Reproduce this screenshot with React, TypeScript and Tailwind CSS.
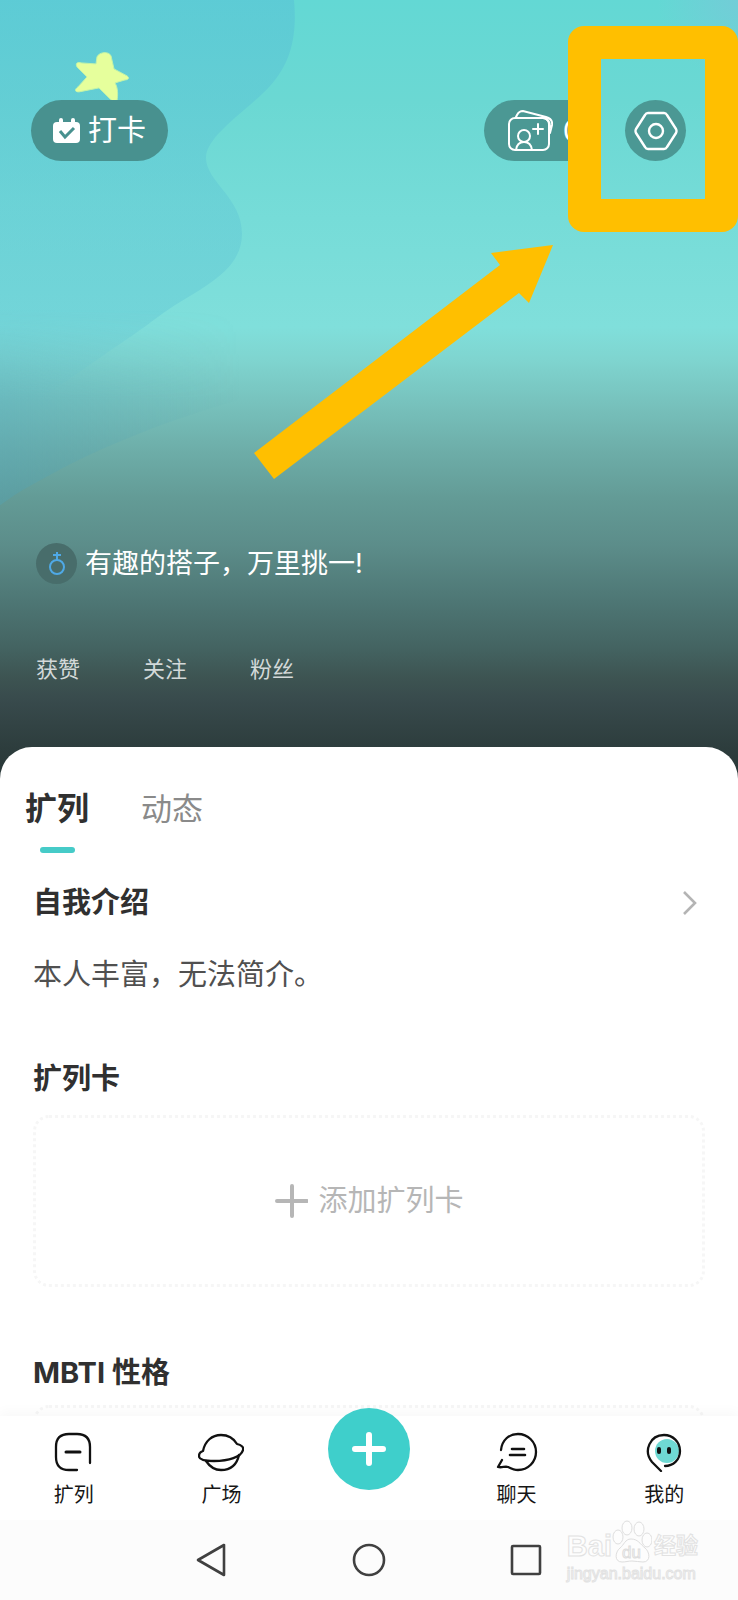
import type { ReactNode } from "react";

const stats = ["获赞", "关注", "粉丝"];

function HeroBackground() {
  return (
    <svg
      className="absolute inset-0 h-full w-full"
      viewBox="0 0 738 780"
      preserveAspectRatio="none"
      aria-hidden="true"
    >
      <defs>
        <linearGradient id="sky" x1="0" y1="0" x2="0" y2="780" gradientUnits="userSpaceOnUse">
          <stop offset="0" stopColor="#63d8d4" />
          <stop offset="0.13" stopColor="#6bd8d3" />
          <stop offset="0.28" stopColor="#76dcd8" />
          <stop offset="0.42" stopColor="#80dfdb" />
          <stop offset="0.46" stopColor="#7fd5d0" />
          <stop offset="0.52" stopColor="#77c1bc" />
          <stop offset="0.58" stopColor="#6dada8" />
          <stop offset="0.64" stopColor="#639b96" />
          <stop offset="0.7" stopColor="#5c8d8a" />
          <stop offset="0.77" stopColor="#4e7775" />
          <stop offset="0.83" stopColor="#446462" />
          <stop offset="0.87" stopColor="#3d5452" />
          <stop offset="0.9" stopColor="#384a4c" />
          <stop offset="0.96" stopColor="#2d3d3d" />
          <stop offset="1" stopColor="#283636" />
        </linearGradient>
        <linearGradient id="wave" x1="0" y1="0" x2="0" y2="400" gradientUnits="userSpaceOnUse">
          <stop offset="0" stopColor="#59c3d6" stopOpacity="0.6" />
          <stop offset="0.5" stopColor="#5fc5d5" stopOpacity="0.42" />
          <stop offset="0.78" stopColor="#5fc5d5" stopOpacity="0.4" />
          <stop offset="0.87" stopColor="#5fc5d5" stopOpacity="0.2" />
          <stop offset="1" stopColor="#5fc5d5" stopOpacity="0" />
        </linearGradient>
        <linearGradient id="shore" x1="0" y1="0" x2="240" y2="0" gradientUnits="userSpaceOnUse">
          <stop offset="0" stopColor="#4fa5bb" stopOpacity="0.34" />
          <stop offset="0.25" stopColor="#4fa5bb" stopOpacity="0.24" />
          <stop offset="1" stopColor="#4fa5bb" stopOpacity="0" />
        </linearGradient>
        <linearGradient id="fade" x1="0" y1="310" x2="0" y2="400" gradientUnits="userSpaceOnUse">
          <stop offset="0" stopColor="#000" />
          <stop offset="1" stopColor="#fff" />
        </linearGradient>
        <mask id="shoreMask">
          <rect y="300" width="260" height="220" fill="url(#fade)" />
        </mask>
        <radialGradient id="corner" cx="738" cy="0" r="80" gradientUnits="userSpaceOnUse">
          <stop offset="0" stopColor="#76cad8" stopOpacity="0.8" />
          <stop offset="1" stopColor="#76cad8" stopOpacity="0" />
        </radialGradient>
      </defs>
      <rect width="738" height="780" fill="url(#sky)" />
      <rect x="658" width="80" height="80" fill="url(#corner)" />
      <path
        d="M0 0H294C297 34 292 62 270 86C246 112 206 136 206 158C206 182 242 198 242 234C242 274 196 290 164 313C148 325 130 338 116 347L40 400H0Z"
        fill="url(#wave)"
      />
      <path d="M0 310H240V400C170 420 110 444 60 470C38 482 18 492 0 506Z" fill="url(#shore)" mask="url(#shoreMask)" />
      <path
        d="M97 57C99 52 109 51 111 56L114 69L127 76C130 78 128 80 125 80L115 83C118 88 118 95 117 101C115 103 112 101 110 99L99 88L79 92C75 92 74 90 78 87L87 77L77 67C75 63 78 62 81 63L96 64Z"
        fill="#e6ff9c"
        stroke="#c2f3a8"
        strokeWidth="1"
      />
    </svg>
  );
}

function HeroBar() {
  return (
    <div className="flex items-center justify-between pr-[52px] pl-[31px]">
      <button className="flex h-[61px] items-center gap-2 rounded-full bg-[#48918f] px-[22px] text-[29px] leading-10 text-white">
        <svg width="27" height="26" viewBox="0 0 27 26" aria-hidden="true">
          <path d="M8 2V8M20 2V8" stroke="#fff" strokeWidth="4" strokeLinecap="round" />
          <rect y="4" width="27" height="21" rx="4" fill="#fff" />
          <path d="M7 13L12 19L21 10" fill="none" stroke="#48918f" strokeWidth="3" />
        </svg>
        打卡
      </button>

      <div className="flex items-center gap-6">
        <button
          className="flex h-[61px] items-center gap-[10px] rounded-full bg-[#4b9894] pr-5 pl-6 text-[29px] leading-10 text-white"
          aria-label="名片 0"
        >
          <svg
            width="45"
            height="41"
            viewBox="0 0 45 41"
            fill="none"
            stroke="#fff"
            strokeWidth="2"
            strokeLinecap="round"
            aria-hidden="true"
          >
            <path d="M8 7L9 5Q11 1 15 1L38 7Q45 9 44 15L42 23M35 8Q42 9 42 17" />
            <rect x="1" y="8" width="40" height="32" rx="6" />
            <circle cx="16" cy="26" r="6" />
            <path d="M8 40Q9 32 16 32T24 40M30 14V24M25 19H35" />
          </svg>
          0
        </button>
        <button
          className="flex size-[61px] items-center justify-center rounded-full bg-[#4b9894]"
          aria-label="设置"
        >
          <svg
            width="44"
            height="40"
            viewBox="0 0 44 40"
            fill="none"
            stroke="#fff"
            strokeWidth="2.4"
            strokeLinejoin="round"
            aria-hidden="true"
          >
            <path d="M14 2H30Q32 2 33 4L42 18Q43 20 42 22L33 36Q32 38 30 38H14Q12 38 11 36L2 22Q1 20 2 18L11 4Q12 2 14 2Z" />
            <circle cx="22" cy="20" r="7" />
          </svg>
        </button>
      </div>
    </div>
  );
}

function SectionTitle({ children }: { children: ReactNode }) {
  return <h2 className="text-[29px] leading-10 font-bold text-[#303030]">{children}</h2>;
}

function NavItem({ label, children }: { label: string; children: ReactNode }) {
  return (
    <a href="#" className="flex flex-1 flex-col items-center gap-[9px] pt-4 text-[20px] leading-7 text-[#161616]">
      <svg
        width="46"
        height="40"
        viewBox="0 0 46 40"
        fill="none"
        stroke="#111"
        strokeWidth="2.3"
        strokeLinecap="round"
        strokeLinejoin="round"
        aria-hidden="true"
      >
        {children}
      </svg>
      {label}
    </a>
  );
}

function Watermark() {
  return (
    <div
      className="absolute right-10 bottom-4 flex flex-col items-start font-['Liberation_Sans','Noto_Sans_CJK_SC',sans-serif] text-[#fdfdfd] [-webkit-text-stroke:1px_#e2e2e2]"
      aria-hidden="true"
    >
      <div className="flex items-end">
        <span className="text-[29px] leading-9 font-bold">Bai</span>
        <svg width="40" height="44" viewBox="0 0 40 44" fill="#fdfdfd" stroke="#dedede">
          <ellipse cx="6" cy="17" rx="5" ry="7" />
          <ellipse cx="15" cy="8" rx="5" ry="7" />
          <ellipse cx="27" cy="9" rx="5" ry="7" />
          <ellipse cx="35" cy="20" rx="5" ry="7" />
          <path d="M19 19C13 19 12 25 8 28C3 32 2 42 10 42C14 42 16 41 20 41S27 42 31 42C39 42 38 32 33 28C28 24 26 19 19 19Z" />
          <text x="10" y="38" fontSize="17">
            du
          </text>
        </svg>
        <span className="pl-[2px] text-[22px] leading-9 font-bold">经验</span>
      </div>
      <span className="text-[16px] leading-5">jingyan.baidu.com</span>
    </div>
  );
}

export default function App() {
  return (
    <div className="flex h-screen flex-col bg-white font-['Inter','Noto_Sans_CJK_SC',sans-serif]">
      <main className="relative min-h-0 flex-1 overflow-x-hidden overflow-y-auto [scrollbar-width:none]">
        <header className="relative pt-[100px] pb-[94px]">
          <HeroBackground />
          <div className="relative">
            <HeroBar />
            <div className="mt-[382px] flex items-center gap-2 pl-9">
              <span className="flex size-[41px] items-center justify-center rounded-full bg-[#486d6b]">
                <svg
                  width="18"
                  height="25"
                  viewBox="0 0 18 25"
                  fill="none"
                  stroke="#4fa9e6"
                  strokeWidth="2"
                  role="img"
                  aria-label="男"
                >
                  <circle cx="9" cy="16" r="7" />
                  <path d="M9 1V9M5 4H13" />
                </svg>
              </span>
              <p className="text-[27px] leading-10 text-white">有趣的搭子，万里挑一!</p>
            </div>
            <div className="mt-[69px] flex gap-[63px] pl-9">
              {stats.map((label) => (
                <a key={label} href="#" className="text-[22px] leading-8 text-[#d3d9d9]">
                  {label}
                </a>
              ))}
            </div>
          </div>

          {/* Highlight frame and arrow over the settings button */}
          <div className="pointer-events-none absolute top-[26px] right-0 h-[206px] w-[170px] rounded-[16px] border-[33px] border-[#ffbf00]" />
          <svg
            className="pointer-events-none absolute top-[245px] right-[185px]"
            width="299"
            height="234"
            viewBox="0 0 299 234"
            aria-hidden="true"
          >
            <path d="M299 0L237 8L246 20L0 208L20 234L265 48L275 58Z" fill="#ffbf00" />
          </svg>
        </header>

        <section className="relative -mt-8 rounded-t-[32px] bg-white pt-[38px]">
          <div className="flex items-start gap-[52px] pl-[25px]" role="tablist">
            <button
              role="tab"
              aria-selected="true"
              className="flex flex-col items-center gap-[14px] text-[32px] leading-[48px] font-bold text-[#303030]"
            >
              扩列
              <span className="h-[6px] w-[35px] rounded-full bg-[#46cbc8]" />
            </button>
            <button role="tab" aria-selected="false" className="text-[31px] leading-[48px] text-[#8a8a8a]">
              动态
            </button>
          </div>

          <div className="px-[33px] pt-[30px]">
            <div className="flex items-center justify-between pr-[8px]">
              <SectionTitle>自我介绍</SectionTitle>
              <svg width="15" height="26" viewBox="0 0 15 26" fill="none" stroke="#b4b4b4" strokeWidth="2.6" aria-hidden="true">
                <path d="M2 2L13 13L2 24" />
              </svg>
            </div>
            <p className="mt-8 text-[29px] leading-10 text-[#505050]">本人丰富，无法简介。</p>

            <div className="mt-16">
              <SectionTitle>扩列卡</SectionTitle>
              <button className="mt-4 flex h-[172px] w-full items-center justify-center gap-[10px] rounded-[16px] border-3 border-dotted border-[#f6f6f6] text-[29px] leading-10 text-[#b6b6b6]">
                <svg width="34" height="34" viewBox="0 0 34 34" stroke="#b6b6b6" strokeWidth="4" strokeLinecap="round" aria-hidden="true">
                  <path d="M18 2V32M3 17H33" />
                </svg>
                添加扩列卡
              </button>
            </div>

            <div className="mt-[66px]">
              <SectionTitle>MBTI 性格</SectionTitle>
              <div className="mt-3 h-[172px] rounded-[16px] border-3 border-dotted border-[#f6f6f6]" />
            </div>
          </div>
        </section>
      </main>

      <nav className="relative flex h-[104px] items-start bg-white shadow-[0_-4px_12px_rgba(0,0,0,0.03)]">
        <NavItem label="扩列">
          <path d="M26 38H18Q5 38 5 25V15Q5 2 18 2H26Q39 2 39 15V31" />
          <path d="M15 20H29" strokeWidth="3" />
        </NavItem>
        <NavItem label="广场">
          <path d="M5 19C7 9 14 3 23 3C31 3 36 7 39 12C43 13 46 15 45 18C43 25 31 29 16 29C8 29 1 28 1 24C1 21 2 20 5 19Z" />
          <path d="M8 29C12 35 17 38 23 38C33 38 39 32 41 23" />
        </NavItem>
        <div className="flex flex-1 justify-center">
          <button
            className="-mt-2 flex size-[82px] items-center justify-center rounded-full bg-[#3fcfcb]"
            aria-label="发布"
          >
            <svg width="36" height="36" viewBox="0 0 36 36" stroke="#fff" strokeWidth="6" strokeLinecap="round" aria-hidden="true">
              <path d="M18 4V32M4 18H32" />
            </svg>
          </button>
        </div>
        <NavItem label="聊天">
          <path d="M7 18C8 8 15 2 24 2C34 2 42 10 42 20S34 38 24 38C20 38 16 36 14 35C11 34 8 36 4 35L8 28" />
          <path d="M18 17H30M16 23H31" strokeWidth="2.6" />
        </NavItem>
        <NavItem label="我的">
          <circle cx="26" cy="19" r="12" fill="#6fd9d3" stroke="none" />
          <path d="M20 39L11 30C2 19 9 3 23 3C32 3 39 10 39 19C39 28 32 34 24 34" />
          <path d="M18 17V20M28 17V20" strokeWidth="4" />
        </NavItem>
      </nav>

      <footer className="relative flex h-20 items-center justify-center gap-[123px] bg-[#fcfcfc]">
        <button aria-label="返回">
          <svg width="34" height="36" viewBox="0 0 34 36" fill="none" stroke="#404040" strokeWidth="2.6" strokeLinejoin="round">
            <path d="M29 3V33L3 18Z" />
          </svg>
        </button>
        <button aria-label="主页">
          <svg width="34" height="36" viewBox="0 0 34 36" fill="none" stroke="#404040" strokeWidth="2.6">
            <circle cx="17" cy="18" r="15" />
          </svg>
        </button>
        <button aria-label="最近任务">
          <svg width="34" height="36" viewBox="0 0 34 36" fill="none" stroke="#404040" strokeWidth="2.6" strokeLinejoin="round">
            <rect x="3" y="4" width="28" height="28" rx="1" />
          </svg>
        </button>
        <Watermark />
      </footer>
    </div>
  );
}
